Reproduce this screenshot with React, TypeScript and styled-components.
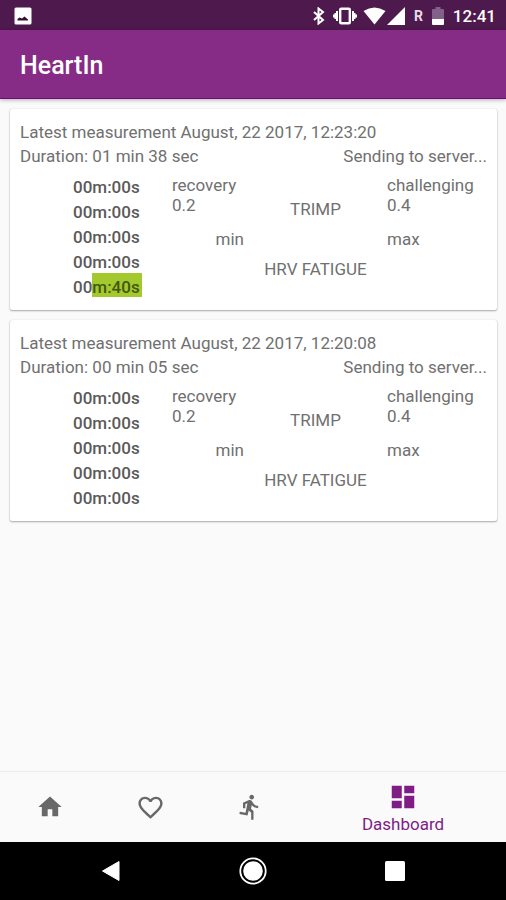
import React from "react";
import styled, { createGlobalStyle } from "styled-components";
import { MdHome, MdFavoriteBorder, MdDirectionsRun, MdDashboard } from "react-icons/md";

const GlobalStyle = createGlobalStyle`
  *, *::before, *::after { box-sizing: border-box; }
  body {
    margin: 0;
    background: #fafafa;
    color: #707070;
    font-family: Roboto, "Liberation Sans", sans-serif;
    font-size: 17px;
    line-height: 24px;
  }
`;

const Screen = styled.div`
  display: flex;
  flex-direction: column;
  min-height: 100vh;
`;

const StatusBar = styled.div`
  display: flex;
  align-items: center;
  justify-content: space-between;
  height: 30px;
  padding: 1px 10px 0 14px;
  background: #4e194d;
  color: #fff;
`;

const StatusIcons = styled.div`
  display: flex;
  align-items: center;
`;

const Glyph = styled.svg<{ $gap?: number }>`
  display: block;
  flex: none;
  margin-left: ${({ $gap = 0 }) => $gap}px;
`;

const Roaming = styled.span`
  margin-left: 9px;
  font-size: 14px;
  font-weight: 700;
  color: #e6dbe6;
`;

const Clock = styled.time`
  margin-left: 9px;
  padding-top: 1px;
  font-size: 17px;
  font-weight: 500;
`;

const AppBar = styled.header`
  display: flex;
  align-items: center;
  height: 69px;
  padding: 4px 20px 0;
  background: #862b86;
  border-bottom: 1px solid #75087a;
  box-shadow: 0 1px 4px rgba(0, 0, 0, 0.3);
`;

const AppTitle = styled.h1`
  margin: 0;
  font-size: 25px;
  font-weight: 500;
  line-height: 32px;
  color: #fff;
`;

const Feed = styled.main`
  display: flex;
  flex: 1;
  flex-direction: column;
  gap: 10px;
  padding: 10px 9px 10px 10px;
`;

const Card = styled.article`
  padding: 11px 10px 10px;
  background: #fff;
  border-radius: 2px;
  box-shadow: 0 1px 2px rgba(0, 0, 0, 0.32), 0 0 1px rgba(0, 0, 0, 0.2);
`;

const Line = styled.div`
  display: flex;
  justify-content: space-between;
`;

const Details = styled.div`
  display: flex;
  padding-top: 7px;
`;

const Zones = styled.div`
  flex: none;
  width: 152px;
  padding-left: 53px;
  font-weight: 500;
  line-height: 25px;
  color: #5a5a5a;
`;

const Highlight = styled.mark`
  padding: 4px 2px 0 0;
  background: #a3c92f;
  color: #42580f;
`;

const Metrics = styled.div`
  display: grid;
  flex: 1;
  grid-template-columns: 72px 1fr 100px;
  grid-template-rows: 44px 30px 30px;
  line-height: 20px;
`;

const Metric = styled.div<{ $align?: string; $row?: string }>`
  align-self: ${({ $row = "end" }) => $row};
  text-align: ${({ $align = "left" }) => $align};
  white-space: nowrap;
`;

const FatigueLabel = styled(Metric)`
  grid-column: 2;
`;

const MaxLabel = styled(Metric)`
  grid-column: 3;
`;

const TabBar = styled.nav`
  display: grid;
  grid-template-columns: 34fr 34fr 34fr 70fr;
  height: 71px;
  border-top: 1px solid #ececec;
`;

const Tab = styled.button<{ $active?: boolean }>`
  display: flex;
  flex-direction: column;
  align-items: center;
  justify-content: center;
  padding: ${({ $active }) => ($active ? "3px 0 0" : "0")};
  border: 0;
  background: none;
  color: ${({ $active }) => ($active ? "#7f1c85" : "#686868")};
  font: inherit;
`;

const SystemBar = styled.div`
  display: grid;
  grid-template-columns: repeat(3, 1fr);
  height: 58px;
  padding: 0 40px;
  background: #000;
`;

const SystemButton = styled.button`
  display: flex;
  align-items: center;
  justify-content: center;
  padding: 0;
  border: 0;
  background: none;
`;

const measurements = [
  { time: "12:23:20", duration: "01 min 38 sec", highlighted: true },
  { time: "12:20:08", duration: "00 min 05 sec", highlighted: false },
];

type MeasurementProps = { time: string; duration: string; highlighted: boolean };

function MeasurementCard({ time, duration, highlighted }: MeasurementProps) {
  return (
    <Card>
      <Line>Latest measurement August, 22 2017, {time}</Line>
      <Line>
        <span>Duration: {duration}</span>
        <span>Sending to server...</span>
      </Line>
      <Details>
        <Zones>
          {[0, 1, 2, 3].map((zone) => (
            <div key={zone}>00m:00s</div>
          ))}
          <div>{highlighted ? <>00<Highlight>m:40s</Highlight></> : "00m:00s"}</div>
        </Zones>
        <Metrics>
          <Metric $row="start">recovery<br />0.2</Metric>
          <Metric $align="center">TRIMP</Metric>
          <Metric $row="start">challenging<br />0.4</Metric>
          <Metric $align="right">min</Metric>
          <MaxLabel>max</MaxLabel>
          <FatigueLabel $align="center">HRV FATIGUE</FatigueLabel>
        </Metrics>
      </Details>
    </Card>
  );
}

export default function App() {
  return (
    <Screen>
      <GlobalStyle />
      <StatusBar>
        <Glyph width="18" height="18" viewBox="0 0 18 18">
          <rect x="0.5" y="0.5" width="17" height="17" rx="1.5" fill="#fff" />
          <path d="M3.5 13.500v-1.500l2-1.500 2.500 1 2.500-2 3.500 3v1Z" fill="#35102f" />
        </Glyph>
        <StatusIcons>
          <Glyph width="13" height="18" viewBox="0 0 13 18" fill="none" stroke="#fff" strokeWidth="2">
            <path d="m2 5 9 8-4.500 3.500v-15L11 5l-9 8" />
          </Glyph>
          <Glyph $gap={8} width="24" height="18" viewBox="0 0 24 18" fill="#fff">
            <rect x="7.200" y="1.700" width="9.600" height="14.600" rx="1" fill="none" stroke="#fff" strokeWidth="2.400" />
            <path d="M5 4v10H3v-2H1.500v-1.500H0v-3h1.500V6H3V4ZM19 4v10h2v-2h1.500v-1.500H24v-3h-1.500V6H21V4Z" />
          </Glyph>
          <Glyph $gap={6} width="23" height="18" viewBox="0 0 23 18">
            <path d="M0.500 4Q11.500-3 22.500 4L11.500 17.500Z" fill="#fff" />
          </Glyph>
          <Glyph $gap={1} width="18" height="18" viewBox="0 0 18 18">
            <path d="M18 0v18H0Z" fill="#fff" />
          </Glyph>
          <Roaming>R</Roaming>
          <Glyph $gap={9} width="12" height="18" viewBox="0 0 12 18">
            <path d="M3.500 0h5v2H11a1 1 0 0 1 1 1v9H0V3a1 1 0 0 1 1-1h2.500Z" fill="#83608a" />
            <path d="M0 12h12v5a1 1 0 0 1-1 1H1a1 1 0 0 1-1-1Z" fill="#fff" />
          </Glyph>
          <Clock>12:41</Clock>
        </StatusIcons>
      </StatusBar>
      <AppBar>
        <AppTitle>HeartIn</AppTitle>
      </AppBar>
      <Feed>
        {measurements.map((item) => (
          <MeasurementCard key={item.time} {...item} />
        ))}
      </Feed>
      <TabBar>
        <Tab aria-label="Home"><MdHome size={28} /></Tab>
        <Tab aria-label="Heart"><MdFavoriteBorder size={29} /></Tab>
        <Tab aria-label="Activity"><MdDirectionsRun size={28} /></Tab>
        <Tab $active aria-current="page">
          <MdDashboard size={30} />
          Dashboard
        </Tab>
      </TabBar>
      <SystemBar>
        <SystemButton aria-label="Back">
          <Glyph width="20" height="22" viewBox="0 0 20 22">
            <path d="M18 1.500v19L1.500 11Z" fill="#fff" stroke="#fff" strokeLinejoin="round" />
          </Glyph>
        </SystemButton>
        <SystemButton aria-label="Home screen">
          <Glyph width="28" height="28" viewBox="0 0 28 28">
            <circle cx="14" cy="14" r="12.700" fill="none" stroke="#fff" strokeWidth="1.800" />
            <circle cx="14" cy="14" r="9.800" fill="#fff" />
          </Glyph>
        </SystemButton>
        <SystemButton aria-label="Recent apps">
          <Glyph width="20" height="20" viewBox="0 0 20 20">
            <rect width="20" height="20" rx="1.500" fill="#fff" />
          </Glyph>
        </SystemButton>
      </SystemBar>
    </Screen>
  );
}
